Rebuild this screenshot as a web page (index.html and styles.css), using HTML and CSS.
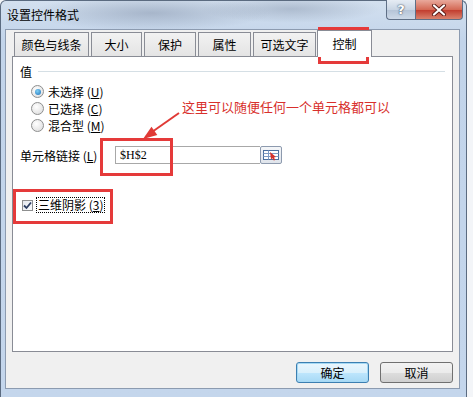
FILE: index.html
```html
<!DOCTYPE html>
<html lang="zh-CN">
<head>
    <meta charset="UTF-8">
    <title>设置控件格式</title>
    <link rel="stylesheet" href="styles.css">
</head>
<body>
    <div class="window">
        <div class="titlebar">
            <span class="title">设置控件格式</span>
            <div class="caption-btns">
                <span class="cap help">?</span>
                <span class="cap close">
                    <svg width="16" height="12" viewBox="0 0 16 12">
                        <path d="M3 1.5 L13 10.5 M13 1.5 L3 10.5" stroke="#5a1a14" stroke-width="4" stroke-linecap="round"/>
                        <path d="M3 1.5 L13 10.5 M13 1.5 L3 10.5" stroke="#fff" stroke-width="2.2" stroke-linecap="round"/>
                    </svg>
                </span>
            </div>
        </div>

        <div class="client">
            <div class="tabs">
                <span class="tab w75">颜色与线条</span>
                <span class="tab w51">大小</span>
                <span class="tab w52">保护</span>
                <span class="tab w53">属性</span>
                <span class="tab w63">可选文字</span>
                <span class="tab active">控制</span>
            </div>

            <div class="panel">
                <div class="group-title">
                    <span>值</span>
                    <span class="rule"></span>
                </div>

                <div class="radios">
                    <label class="radio-row"><span class="radio checked"></span>未选择 (<u>U</u>)</label>
                    <label class="radio-row"><span class="radio"></span>已选择 (<u>C</u>)</label>
                    <label class="radio-row"><span class="radio"></span>混合型 (<u>M</u>)</label>
                </div>

                <div class="link-row">
                    <span class="link-label">单元格链接 (<u>L</u>)</span>
                    <span class="ref-input">$H$2</span>
                    <span class="ref-btn">
                        <svg width="18" height="12" viewBox="0 0 18 12">
                            <rect x="1.5" y="1.5" width="15" height="9" fill="#fff" stroke="#4b6f9e"/>
                            <path d="M1.5 4.5 H16.5 M1.5 7.5 H16.5 M6.5 1.5 V10.5" stroke="#7f9cc4"/>
                            <path d="M8 3 L14 8 L12 8.6 L13.2 11 L11.8 11.6 L10.6 9.2 L9 10.4 Z" fill="#d4322b"/>
                        </svg>
                    </span>
                </div>

                <div class="check-row">
                    <span class="checkbox">
                        <svg width="9" height="9" viewBox="0 0 9 9">
                            <path d="M1 4.5 L3.5 7 L8 1.5" fill="none" stroke="#2c3e63" stroke-width="1.8"/>
                        </svg>
                    </span>
                    <span class="focus-text">三维阴影 (<u>3</u>)</span>
                </div>
            </div>

            <div class="buttons">
                <span class="btn default">确定</span>
                <span class="btn">取消</span>
            </div>
        </div>

        <!-- annotations over the dialog -->
        <div class="mark mark-tab"></div>
        <div class="mark mark-input"></div>
        <div class="mark mark-check"></div>
        <div class="note">这里可以随便任何一个单元格都可以</div>
        <svg class="arrow" width="60" height="40" viewBox="140 108 60 40">
            <path d="M179 113 L152 132" stroke="#e03a36" stroke-width="2"/>
            <polygon points="143,139 157.3,135 151.5,126.8" fill="#e03a36"/>
        </svg>
    </div>
</body>
</html>
```

FILE: styles.css
```css
body {
    margin: 0;
    background-color: #f3f5f8;
    font-family: "Noto Sans CJK SC", "Liberation Sans", sans-serif;
    font-size: 12px;
    color: #000;
}
.window {
    position: relative;
    width: 467px;
    height: 397px;
    border: 1px solid #5b6b80;
    border-bottom: none;
    border-radius: 6px 6px 0 0;
    background:
        radial-gradient(ellipse 120px 18px at 150px 12px, rgba(120, 135, 160, 0.45), transparent),
        radial-gradient(ellipse 90px 14px at 290px 8px, rgba(110, 125, 150, 0.35), transparent),
        linear-gradient(to bottom, #d3e0ef, #c2d4ea 40px, #c4d6ec);
    padding: 0 6px 0 4px;
    box-sizing: border-box;
}
.titlebar {
    height: 28px;
    display: flex;
    justify-content: space-between;
    align-items: flex-start;
}
.title {
    margin-top: 6px;
    margin-left: 2px;
    line-height: 16px;
}
.caption-btns {
    display: flex;
    margin-right: -3px;
    margin-top: -1px;
}
.cap {
    height: 20px;
    display: flex;
    align-items: center;
    justify-content: center;
    border: 1px solid #5f6f86;
    border-top: none;
    box-sizing: border-box;
}
.help {
    width: 29px;
    border-right: none;
    border-radius: 0 0 0 4px;
    background: linear-gradient(to bottom, #e6ecf4, #c9d5e4 50%, #b4c3d6 51%, #cdd9e8);
    color: #fff;
    font-family: "DejaVu Sans", sans-serif;
    font-weight: bold;
    font-size: 13px;
    text-shadow: 0 0 2px #3d4d63, 0 0 1px #3d4d63;
}
.close {
    width: 48px;
    border-radius: 0 0 4px 0;
    background: linear-gradient(to bottom, #e9a99c, #d46a56 50%, #c0392b 51%, #d9826d);
}
.client {
    background-color: #f0f0f0;
    border: 1px solid #8c9bb0;
    height: 360px;
    box-sizing: border-box;
    padding: 0 6px;
}
.tabs {
    display: flex;
    align-items: flex-end;
    gap: 2px;
    padding-left: 2px;
    height: 27px;
    position: relative;
    z-index: 1;
}
.tab {
    height: 24px;
    box-sizing: border-box;
    border: 1px solid #898c95;
    border-bottom: none;
    background: linear-gradient(to bottom, #f2f2f2, #e4e4e4);
    display: flex;
    align-items: center;
    justify-content: center;
    margin-bottom: 1px;
}
.w75 { width: 75px; }
.w51 { width: 51px; }
.w52 { width: 52px; }
.w53 { width: 53px; }
.w63 { width: 63px; }
.tab.active {
    width: 55px;
    height: 27px;
    margin-bottom: 0;
    margin-left: -1px;
    background: #fff;
    padding-bottom: 2px;
}
.panel {
    height: 296px;
    box-sizing: border-box;
    background-color: #fff;
    border: 1px solid #898c95;
    margin-top: -1px;
    padding: 6px 7px 0 7px;
}
.group-title {
    display: flex;
    align-items: center;
    height: 16px;
    gap: 6px;
}
.rule {
    flex: 1;
    height: 1px;
    background-color: #d5dfe5;
    margin-right: 0;
}
.radios {
    margin-top: 4px;
    padding-left: 11px;
}
.radio-row {
    display: flex;
    align-items: center;
    height: 17px;
}
.radio {
    width: 11px;
    height: 11px;
    border-radius: 50%;
    border: 1px solid #8e8f8f;
    background: radial-gradient(circle at 40% 35%, #fff, #d9d9d9);
    margin-right: 4px;
    position: relative;
}
.radio.checked::after {
    content: "";
    position: absolute;
    left: 2.5px;
    top: 2.5px;
    width: 6px;
    height: 6px;
    border-radius: 50%;
    background: radial-gradient(circle at 40% 35%, #7fd0f5, #1d6fb8);
}
.link-row {
    display: flex;
    align-items: center;
    margin-top: 12px;
    height: 18px;
}
.link-label {
    width: 95px;
}
.ref-input {
    width: 145px;
    height: 18px;
    box-sizing: border-box;
    border: 1px solid #a8a8a8;
    border-right: none;
    padding-left: 4px;
    font-family: "Liberation Serif", serif;
    line-height: 16px;
}
.ref-btn {
    width: 22px;
    height: 18px;
    box-sizing: border-box;
    border: 1px solid #8d9aae;
    border-radius: 2px;
    background: linear-gradient(to bottom, #f4f6f9, #dfe4eb);
    display: flex;
    align-items: center;
    justify-content: center;
}
.check-row {
    display: flex;
    align-items: center;
    margin-top: 33px;
    height: 16px;
    padding-left: 2px;
}
.checkbox {
    width: 11px;
    height: 11px;
    box-sizing: border-box;
    border: 1px solid #8e8f8f;
    background: linear-gradient(to bottom right, #e4e7ee, #fafbfc);
    display: flex;
    align-items: center;
    justify-content: center;
    margin-right: 3px;
}
.focus-text {
    border: 1px dotted #000;
    padding: 0 1px;
    line-height: 14px;
}
.buttons {
    display: flex;
    justify-content: flex-end;
    gap: 11px;
    margin-top: 10px;
}
.btn {
    width: 73px;
    height: 21px;
    box-sizing: border-box;
    border: 1px solid #707070;
    border-radius: 3px;
    background: linear-gradient(to bottom, #f2f2f2, #ebebeb 50%, #dddddd 51%, #cfcfcf);
    display: flex;
    align-items: center;
    justify-content: center;
}
.btn.default {
    border-color: #3c7fb1;
    box-shadow: inset 0 0 0 1px #a6d9f4;
    background: linear-gradient(to bottom, #eaf6fd, #d9f0fc 50%, #bee6fd 51%, #a7d9f5);
}
.mark {
    position: absolute;
    border: 3px solid #e53a3a;
    box-sizing: border-box;
}
.mark-tab {
    left: 317px;
    top: 26px;
    width: 51px;
    height: 37px;
}
.mark-input {
    left: 99px;
    top: 137px;
    width: 73px;
    height: 38px;
}
.mark-check {
    left: 12px;
    top: 188px;
    width: 100px;
    height: 35px;
}
.note {
    position: absolute;
    left: 181px;
    top: 97px;
    font-size: 13px;
    color: #d8302c;
    line-height: 18px;
}
.arrow {
    position: absolute;
    left: 139px;
    top: 107px;
}
```
